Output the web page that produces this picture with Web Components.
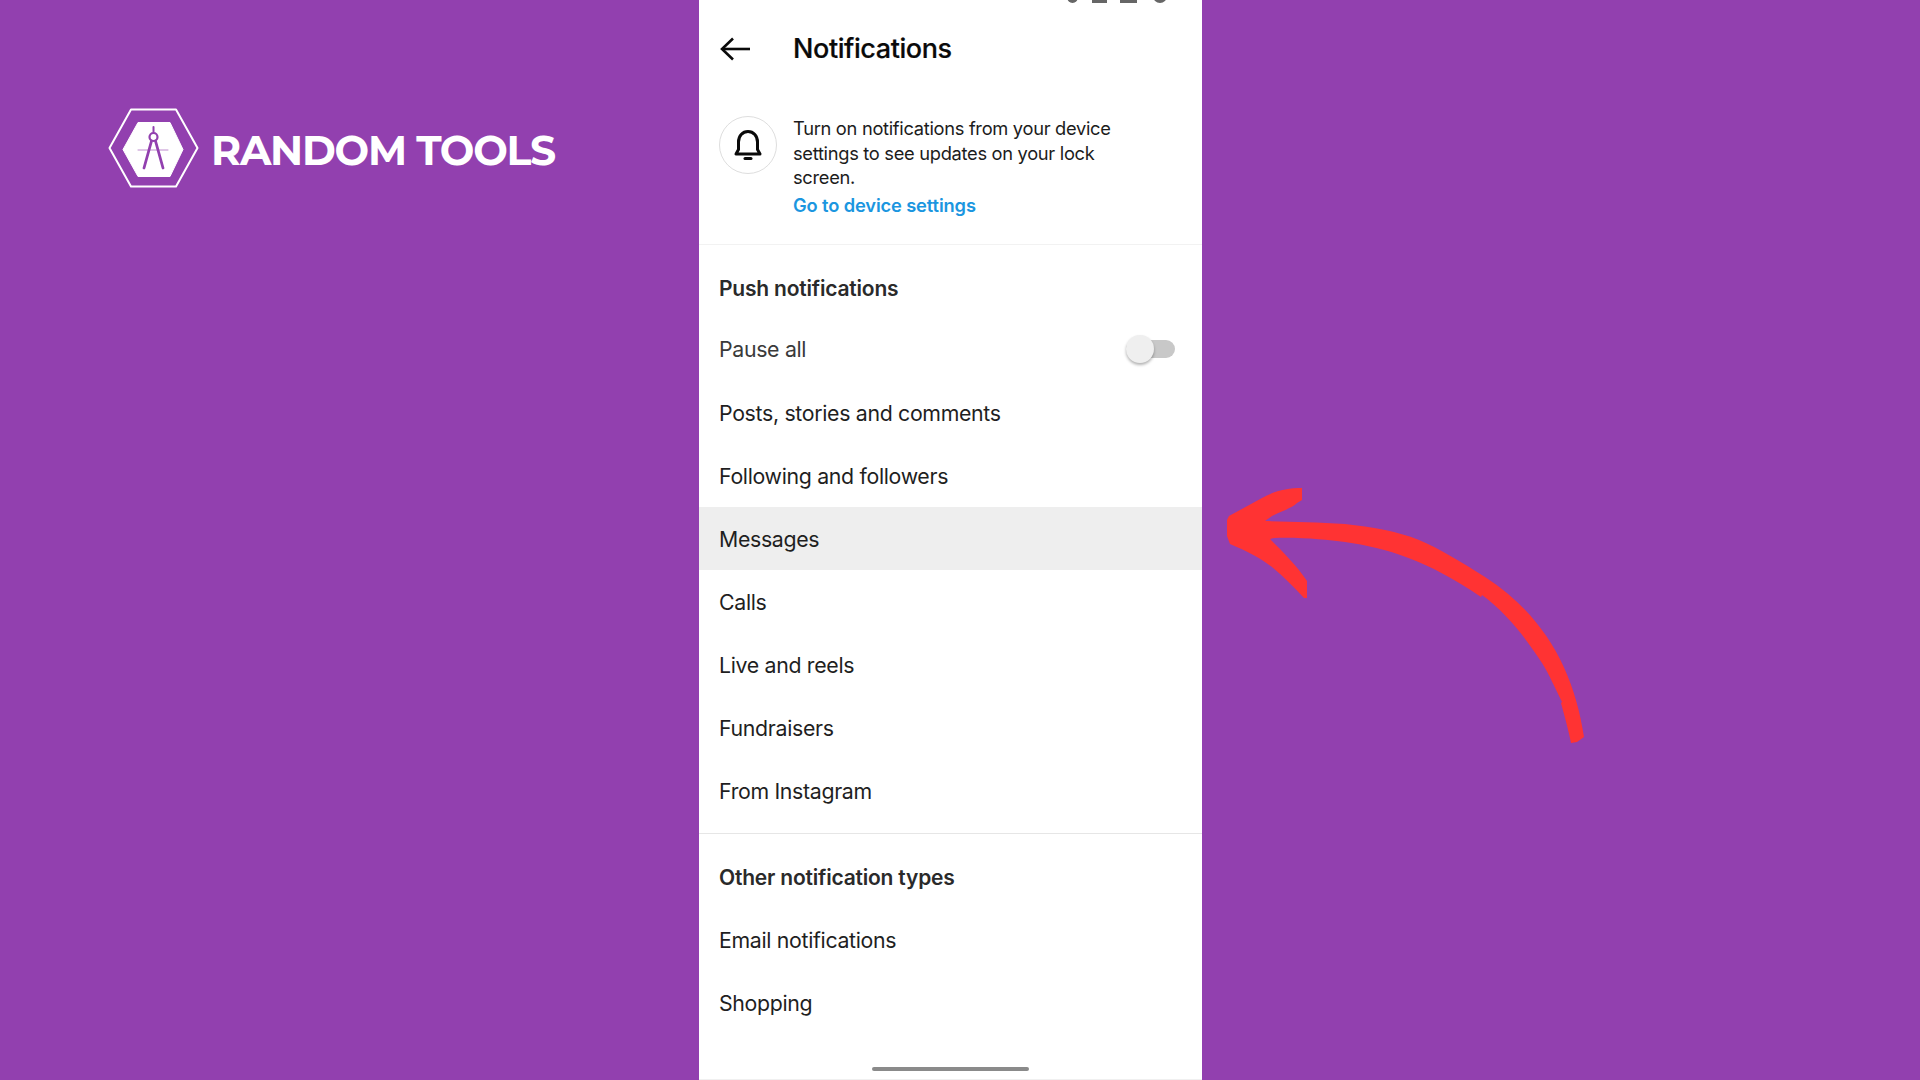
<!DOCTYPE html>
<html><head><meta charset="utf-8"><style>
html,body{margin:0;padding:0;width:1920px;height:1080px;overflow:hidden;background:#9240AF}
body{font-family:"Liberation Sans",Arial,sans-serif}
</style></head><body>
<promo-stage>
  <brand-logo slot="left"></brand-logo>
  <phone-screen slot="phone">
    <status-fragment></status-fragment>
    <screen-header>Notifications</screen-header>
    <device-banner>Turn on notifications from your device settings to see updates on your lock screen.</device-banner>
    <section-divider tone="soft"></section-divider>
    <section-title style="--top:24px;--after:11px">Push notifications</section-title>
    <setting-row toggle muted>Pause all</setting-row>
    <setting-row>Posts, stories and comments</setting-row>
    <setting-row>Following and followers</setting-row>
    <setting-row active>Messages</setting-row>
    <setting-row>Calls</setting-row>
    <setting-row>Live and reels</setting-row>
    <setting-row>Fundraisers</setting-row>
    <setting-row>From Instagram</setting-row>
    <section-divider style="--top:11px"></section-divider>
    <section-title style="--top:24px;--after:12px">Other notification types</section-title>
    <setting-row>Email notifications</setting-row>
    <setting-row>Shopping</setting-row>
    <home-bar></home-bar>
  </phone-screen>
  <red-arrow slot="right"></red-arrow>
</promo-stage>
<script>
function def(name, html){
  customElements.define(name, class extends HTMLElement{
    constructor(){super();const r=this.attachShadow({mode:'open'});r.innerHTML=html;}
  });
}
def('promo-stage',`<style>
:host{display:grid;grid-template-columns:699px 503px 1fr;width:1920px;height:1080px;background:#9240AF}
.l{display:block;min-width:0}.r{display:block;min-width:0;position:relative}
</style><div class="l"><slot name="left"></slot></div><slot name="phone"></slot><div class="r"><slot name="right"></slot></div>`);
def('brand-logo',`<style>
:host{display:flex;align-items:center;gap:12px;margin:108px 0 0 108px;height:80px}
svg{display:block;flex:none}
span{font:700 41px/1 "Montserrat","Lato","Open Sans",sans-serif;color:#fff;white-space:nowrap;letter-spacing:-1.25px;position:relative;top:2px}
</style>
<svg width="91" height="80" viewBox="0 0 91 80">
<path d="M1.5 40 L23 1.5 H68 L89.5 40 L68 78.5 H23 Z" fill="none" stroke="#fff" stroke-width="2" stroke-linejoin="round"/>
<path d="M15 41.5 L30 14.5 H62 L75 41.5 L62 68.5 H30 Z" fill="#fff" stroke="#fff" stroke-width="1" stroke-linejoin="round"/>
<g fill="none" stroke="#9240AF" stroke-linecap="round">
<path d="M30 42 H60" stroke-width="1" opacity=".6"/>
<path d="M45.5 19 V24" stroke-width="2"/>
<circle cx="45.5" cy="29" r="4" stroke-width="2.2"/>
<path d="M43.5 33 L36 60 M47.5 33 L55 60" stroke-width="2.8"/>
</g></svg><span>RANDOM TOOLS</span>`);
def('phone-screen',`<style>
:host{display:flex;flex-direction:column;height:1080px;background:#fff;color:#262626;overflow:hidden;box-sizing:border-box;border-bottom:1px solid #f0f0f0}
</style><slot></slot>`);
def('status-fragment',`<style>
:host{display:flex;justify-content:flex-end;height:4px;padding-right:35px;overflow:hidden}
i{display:block;flex:none;height:10px;margin-top:-7px;background:#666}
i.c{width:11px;height:12px;margin-top:-9px;border-radius:50%}
i.a{margin-right:14px}i.s{width:15px;margin-right:13px}i.b{width:17px;margin-right:16px}i.d{width:14px;height:14px;margin-top:-11px}
</style><i class="c a"></i><i class="s"></i><i class="b"></i><i class="c d"></i>`);
def('screen-header',`<style>
:host{display:flex;align-items:center;height:89px;padding-left:21px;box-sizing:border-box}
svg{display:block;flex:none;margin-right:43px}
span{font:500 27px/1 "Inter","Liberation Sans",sans-serif;letter-spacing:-.42px;color:#0a0a0a;-webkit-text-stroke:.2px #0a0a0a}
</style><svg width="30" height="24" viewBox="0 0 30 24" fill="none" stroke="#0a0a0a" stroke-width="2.6"><path d="M30 12 H2"/><path d="M13 1.5 L2 12 L13 22.5"/></svg><span><slot></slot></span>`);
def('device-banner',`<style>
:host{display:flex;align-items:flex-start;padding:23px 40px 0 20px;height:151px;box-sizing:border-box}
.c{flex:none;width:58px;height:58px;border-radius:50%;border:1px solid #dedede;box-sizing:border-box;display:flex;align-items:center;justify-content:center;margin:0 16px 0 0}
.t{font:400 18.3px/24.6px "Inter","Liberation Sans",sans-serif;letter-spacing:-.3px;color:#1c1c1c;max-width:330px}
.a{display:block;color:#1b96e0;font-weight:600;line-height:24px;margin-top:3px;letter-spacing:-.13px}
</style><div class="c"><svg width="30" height="34" viewBox="0 0 30 34" fill="none" stroke="#0a0a0a" stroke-width="3" stroke-linejoin="round">
<path d="M3 26 H27 L24.5 21.5 V14 C24.5 8 20.5 3.5 15 3.5 C9.5 3.5 5.5 8 5.5 14 V21.5 Z"/><path d="M12 30.5 H18" stroke-linecap="round" stroke-width="3"/></svg></div>
<div class="t"><slot></slot><span class="a">Go to device settings</span></div>`);
def('section-divider',`<style>
:host{display:block;flex:none;height:1px;background:#e6e6e6;margin-top:var(--top,0)}
:host([tone=soft]){background:#f2f2f2}
</style>`);
def('section-title',`<style>
:host{display:flex;flex:none;align-items:center;height:38px;margin-top:var(--top,0);margin-bottom:var(--after,0);padding-left:20px;font:600 21px/1 "Inter","Liberation Sans",sans-serif;letter-spacing:-.2px;color:#2a2a2a}
</style><slot></slot>`);
def('setting-row',`<style>
:host{display:flex;flex:none;align-items:center;justify-content:space-between;height:63px;padding:0 27px 0 20px;font:400 21.3px/1 "Inter","Liberation Sans",sans-serif;letter-spacing:-.32px;color:#1f1f1f}
:host([active]){background:#eeeeee}
:host([muted]){color:#3a3a3a}
span{position:relative;top:1px}
:host([toggle]) span{top:0}
.sw{position:relative;top:-1px;width:49px;height:18px;border-radius:9px;background:#c8c8c8;display:none}
.sw::after{content:"";position:absolute;left:0;top:-5px;width:28px;height:28px;border-radius:50%;background:#efefef;box-shadow:0 2px 3px rgba(0,0,0,.3)}
:host([toggle]) .sw{display:block}
</style><span><slot></slot></span><div class="sw"></div>`);
def('home-bar',`<style>
:host{display:block;width:157px;height:4px;border-radius:2px;background:#8a8a8a;margin:33px auto 0;flex:none}
</style>`);
def('red-arrow',`<style>
:host{display:block;position:absolute;left:0;top:0}
svg{display:block;position:absolute;left:0;top:470px;overflow:visible}
</style>
<svg width="400" height="290" viewBox="0 0 400 290"><path fill="#FF3333" d="M100 18 C85 18 72 21 60 28 L27 46 L25 50 V66 L28 74 C45 81 58 88 70 97 C82 107 92 117 102 128 H105 V111 C95 96 82 83 68 69 L72 68 C100 67 125 70 143 72 C185 78 225 90 279 127 L280 125 C305 143 325 170 340 193 C348 206 353 218 360 232 L359 233 C363 248 367 262 369 273 L375 272 L382 267 C372 200 342 145 283 107 C258 91 238 79 217 70 C195 61 170 57 143 54 C115 52 90 52 63 51 L70 46 C80 41 90 38 95 33 L100 30 Z"/></svg>`);
</script>
</body></html>
